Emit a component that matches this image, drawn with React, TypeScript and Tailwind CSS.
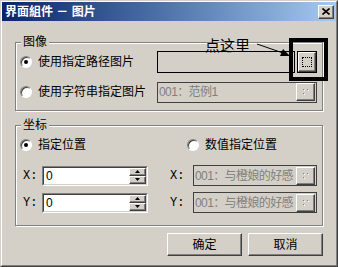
import React from "react";

const font = "font-['Liberation_Sans','Noto_Sans_CJK_SC',sans-serif]";

function Radio({ checked }: { checked?: boolean }) {
  return (
    <span className="relative flex h-[12px] w-[12px] shrink-0 items-center justify-center rounded-full border border-t-[#808080] border-l-[#808080] border-b-white border-r-white bg-white shadow-[inset_1px_1px_0_#404040]">
      {checked && <span className="h-[4px] w-[4px] rounded-full bg-black" />}
    </span>
  );
}

function Group({ label, className, children }: { label: string; className?: string; children: React.ReactNode }) {
  return (
    <div className={"relative border border-[#808080] shadow-[inset_1px_1px_0_white,1px_1px_0_white] " + (className ?? "")}>
      <span className="absolute -top-[9px] left-[5px] bg-[#d4d0c8] px-[2px] text-[12px] leading-[16px] text-black">{label}</span>
      {children}
    </div>
  );
}

function Sunken({ className, children }: { className?: string; children?: React.ReactNode }) {
  return (
    <div className={"flex border border-t-[#808080] border-l-[#808080] border-b-white border-r-white " + (className ?? "")}>
      <div className="flex min-w-0 flex-1 items-center border border-t-[#404040] border-l-[#404040] border-b-[#d4d0c8] border-r-[#d4d0c8]">
        {children}
      </div>
    </div>
  );
}

function SpinBtn({ up }: { up?: boolean }) {
  return (
    <div className="flex h-[8px] w-[17px] items-center justify-center border border-t-white border-l-white border-b-[#404040] border-r-[#404040] bg-[#d4d0c8] shadow-[inset_-1px_-1px_0_#808080]">
      <svg width="5" height="3" viewBox="0 0 5 3">
        {up ? <path d="M2.5 0 L5 3 L0 3 Z" fill="black" /> : <path d="M0 0 L5 0 L2.5 3 Z" fill="black" />}
      </svg>
    </div>
  );
}

function NumInput() {
  return (
    <Sunken className="h-[20px] w-[106px] bg-white">
      <span className="flex-1 pl-[2px] text-[12px] leading-none">0</span>
      <div className="flex flex-col">
        <SpinBtn up />
        <SpinBtn />
      </div>
    </Sunken>
  );
}

function DisabledCombo({ text, w }: { text: string; w: string }) {
  return (
    <div className={"flex h-[21px] items-center border border-[#404040] bg-[#d4d0c8] " + w}>
      <span className="min-w-0 flex-1 overflow-hidden whitespace-nowrap pl-[1px] text-[12px] tracking-[-0.6px] text-[#808080]">{text}</span>
      <div className="mr-[1px] flex h-[18px] w-[19px] shrink-0 items-center justify-center border border-t-white border-l-white border-b-[#404040] border-r-[#404040] shadow-[inset_-1px_-1px_0_#808080]">
        <svg width="8" height="8" viewBox="0 0 8 8">
          <rect x="1" y="1" width="1" height="1" fill="#808080" />
          <rect x="5" y="1" width="1" height="1" fill="#808080" />
          <rect x="1" y="5" width="1" height="1" fill="#808080" />
          <rect x="2" y="2" width="1" height="1" fill="white" />
          <rect x="6" y="2" width="1" height="1" fill="white" />
          <rect x="2" y="6" width="1" height="1" fill="white" />
        </svg>
      </div>
    </div>
  );
}

function Button({ children }: { children: React.ReactNode }) {
  return (
    <div className="flex h-[23px] w-[75px] items-center justify-center border border-t-white border-l-white border-b-[#404040] border-r-[#404040] shadow-[inset_-1px_-1px_0_#808080] text-[12px]">
      {children}
    </div>
  );
}

export default function App() {
  return (
    <div className={"relative h-[267px] w-[338px] overflow-hidden border border-t-[#d4d0c8] border-l-[#d4d0c8] border-b-[#404040] border-r-[#404040] bg-[#d4d0c8] text-black " + font}>
      <div className="flex h-full flex-col border border-t-white border-l-white border-b-[#808080] border-r-[#808080]">
        <div className="flex h-[19px] items-center justify-between bg-linear-to-r from-[#0a246a] to-[#a6caf0] pl-[3px] pr-[2px]">
          <span className="text-[12px] font-bold leading-none text-white">界面組件 － 图片</span>
          <div className="flex h-[14px] w-[16px] items-center justify-center border border-t-white border-l-white border-b-[#404040] border-r-[#404040] bg-[#d4d0c8] shadow-[inset_-1px_-1px_0_#808080]">
            <svg width="8" height="7" viewBox="0 0 8 7">
              <path d="M0.5 0.5 L7.5 6.5 M7.5 0.5 L0.5 6.5" stroke="black" strokeWidth="1.6" />
            </svg>
          </div>
        </div>

        <div className="ml-[13px] mt-[21px] w-[308px]">
          <Group label="图像" className="h-[69px] pt-[8px]">
            <div className="flex h-[22px] items-center">
              <div className="flex w-[141px] items-center gap-[6px] pl-[4px] text-[12px]">
                <Radio checked />
                <span>使用指定路径图片</span>
              </div>
              <div className="h-[22px] w-[138px] border border-black" />
              <div className="ml-[2px] flex h-[22px] w-[20px] items-center justify-center border border-black">
                <div className="flex h-full w-full items-center justify-center border border-t-white border-l-white border-b-[#404040] border-r-[#404040] shadow-[inset_-1px_-1px_0_#808080]">
                  <div className="h-[10px] w-[10px] border border-dotted border-black" />
                </div>
              </div>
            </div>
            <div className="mt-[8px] flex h-[22px] items-center">
              <div className="flex w-[141px] items-center gap-[6px] pl-[4px] text-[12px]">
                <Radio />
                <span>使用字符串指定图片</span>
              </div>
              <DisabledCombo text="001：范例1" w="w-[160px]" />
            </div>
          </Group>

          <Group label="坐标" className="mt-[14px] h-[101px] pt-[12px]">
            <div className="flex h-[14px] items-center text-[12px]">
              <div className="flex w-[154px] items-center gap-[6px] pl-[4px]">
                <Radio checked />
                <span>指定位置</span>
              </div>
              <div className="flex items-center gap-[6px] pl-[17px]">
                <Radio />
                <span>数值指定位置</span>
              </div>
            </div>
            {["X:", "Y:"].map((l, i) => (
              <div key={l} className={"flex h-[21px] items-center " + (i === 0 ? "mt-[13px]" : "mt-[6px]")}>
                <div className="flex w-[154px] items-center">
                  <span className="w-[26px] pl-[7px] font-['Liberation_Mono',monospace] text-[12px]">{l}</span>
                  <NumInput />
                </div>
                <span className="w-[23px] font-['Liberation_Mono',monospace] text-[12px]">{l}</span>
                <DisabledCombo text="001：与橙娘的好感" w="w-[124px]" />
              </div>
            ))}
          </Group>

          <div className="mt-[7px] flex justify-end gap-[6px]">
            <Button>确定</Button>
            <Button>取消</Button>
          </div>
        </div>
      </div>

      <span className="absolute left-[204px] top-[36px] text-[15px] leading-[17px] text-black">点这里</span>
      <svg className="absolute left-[255px] top-[41px]" width="36" height="16" viewBox="0 0 36 16">
        <path d="M1 2 L27 11" stroke="black" strokeWidth="1" />
        <path d="M34 14 L24 14 L27 7 Z" fill="black" />
      </svg>
      <div className="absolute left-[288px] top-[37px] h-[43px] w-[39px] border-4 border-black" />
    </div>
  );
}
